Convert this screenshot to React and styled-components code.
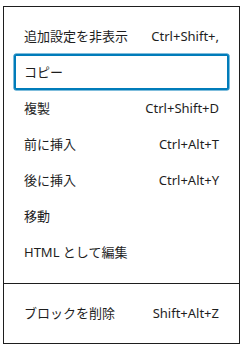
import styled, { createGlobalStyle } from 'styled-components'

const GlobalStyle = createGlobalStyle`
	html,
	body {
		margin: 0;
		padding: 0;
		background: #ffffff;
	}

	body {
		font-family: 'Noto Sans', 'Noto Sans CJK JP', sans-serif;
		color: #1e1e1e;
	}
`

const Popover = styled.div`
	margin: 6px 3px 0 3px;
	width: 237px;
	box-sizing: border-box;
	border: 1px solid #1e1e1e;
	background: #ffffff;
`

const MenuGroup = styled.div`
	padding: 11px 10px 12px;

	&:first-child {
		padding-bottom: 13px;
	}

	& + & {
		border-top: 1px solid #1e1e1e;
	}
`

const MenuItem = styled.div`
	display: flex;
	align-items: center;
	justify-content: space-between;
	height: 36px;
	padding: 0 10px 1px;
	box-sizing: border-box;
	border-radius: 2px;
	font-size: 13px;
	box-shadow: ${(p) => (p.$focused ? 'inset 0 0 0 2px #007cba, 0 0 0 0.5px #007cba' : 'none')};
`

const Label = styled.span`
	white-space: nowrap;
`

const Shortcut = styled.span`
	white-space: nowrap;
	font-size: 13px;
	color: #1e1e1e;
`

const mainItems = [
	{ label: '追加設定を非表示', shortcut: 'Ctrl+Shift+,' },
	{ label: 'コピー', focused: true },
	{ label: '複製', shortcut: 'Ctrl+Shift+D' },
	{ label: '前に挿入', shortcut: 'Ctrl+Alt+T' },
	{ label: '後に挿入', shortcut: 'Ctrl+Alt+Y' },
	{ label: '移動' },
	{ label: 'HTML として編集' },
]

export default function App() {
	return (
		<>
			<GlobalStyle />
			<Popover>
				<MenuGroup>
					{mainItems.map((item) => (
						<MenuItem key={item.label} $focused={item.focused}>
							<Label>{item.label}</Label>
							{item.shortcut && <Shortcut>{item.shortcut}</Shortcut>}
						</MenuItem>
					))}
				</MenuGroup>
				<MenuGroup>
					<MenuItem>
						<Label>ブロックを削除</Label>
						<Shortcut>Shift+Alt+Z</Shortcut>
					</MenuItem>
				</MenuGroup>
			</Popover>
		</>
	)
}
